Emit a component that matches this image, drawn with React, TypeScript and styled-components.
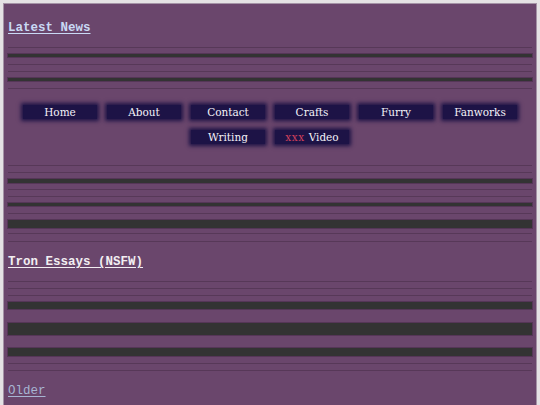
import React from 'react'
import styled, { createGlobalStyle } from 'styled-components'

const Global = createGlobalStyle`
  html, body {
    margin: 0;
    padding: 0;
    background: #e4e2e4;
  }
`

const Page = styled.div`
  margin: 3px 3px 0;
  border: 1px solid #a493a6;
  border-bottom: none;
  background: #6a466c;
  padding: 0 4px 24px;
  min-height: 420px;
`

const Heading = styled.a<{ $tone: 'news' | 'post' | 'older'; $mt: number }>`
  display: block;
  width: max-content;
  margin-top: ${p => p.$mt}px;
  font-family: 'Liberation Mono', monospace;
  font-size: 12.5px;
  line-height: 15px;
  font-weight: ${p => (p.$tone === 'older' ? 400 : 700)};
  text-decoration: underline;
  text-underline-offset: 2px;
  cursor: pointer;
  color: ${p =>
    p.$tone === 'news' ? '#c9d9f5' : p.$tone === 'post' ? '#f2eef2' : '#a7b5d2'};
`

const Rule = styled.div<{ $mt: number }>`
  margin-top: ${p => p.$mt}px;
  height: 1px;
  background: #573858;
`

const Bar = styled.div<{ $mt: number; $h: number }>`
  margin-top: ${p => p.$mt}px;
  height: ${p => p.$h}px;
  background: #333333;
  box-shadow: 0 0 0 1px rgba(80, 50, 82, 0.8);
`

const Nav = styled.nav`
  margin-top: 15px;
  display: flex;
  flex-wrap: wrap;
  justify-content: center;
  column-gap: 10px;
  row-gap: 9px;
  padding: 0 10px;
`

// soft-edged pill: a narrow solid core with a wide blur round it
const NavButton = styled.a`
  width: 74px;
  height: 14px;
  margin: 1px 0;
  display: flex;
  align-items: center;
  justify-content: center;
  background: #1d1346;
  box-shadow: 0 0 4px 2px #1d1346;
  color: #f4f2f8;
  font-family: 'DejaVu Serif', serif;
  font-size: 10.5px;
  line-height: 14px;
  cursor: pointer;
`

const Xxx = styled.span`
  color: #d2405c;
  letter-spacing: 0.5px;
  margin-right: 4px;
`

const links = ['Home', 'About', 'Contact', 'Crafts', 'Furry', 'Fanworks', 'Writing']

export default function App() {
  return (
    <>
      <Global />
      <Page>
        <Heading $tone="news" $mt={17}>Latest News</Heading>
        <Rule $mt={11} />
        <Bar $mt={6} $h={3} />
        <Rule $mt={7} />
        <Rule $mt={6} />
        <Bar $mt={6} $h={3} />
        <Rule $mt={7} />

        <Nav>
          {links.map(l => (
            <NavButton key={l}>{l}</NavButton>
          ))}
          <NavButton>
            <Xxx>xxx</Xxx>Video
          </NavButton>
        </Nav>

        <Rule $mt={20} />
        <Rule $mt={6} />
        <Bar $mt={6} $h={4} />
        <Rule $mt={6} />
        <Rule $mt={6} />
        <Bar $mt={6} $h={3} />
        <Rule $mt={7} />
        <Bar $mt={6} $h={8} />
        <Rule $mt={5} />
        <Rule $mt={7} />

        <Heading $tone="post" $mt={13}>Tron Essays (NSFW)</Heading>
        <Rule $mt={11} />
        <Rule $mt={6} />
        <Rule $mt={6} />
        <Bar $mt={6} $h={7} />
        <Bar $mt={14} $h={12} />
        <Bar $mt={13} $h={8} />
        <Rule $mt={7} />
        <Rule $mt={6} />

        <Heading $tone="older" $mt={13}>Older</Heading>
      </Page>
    </>
  )
}
